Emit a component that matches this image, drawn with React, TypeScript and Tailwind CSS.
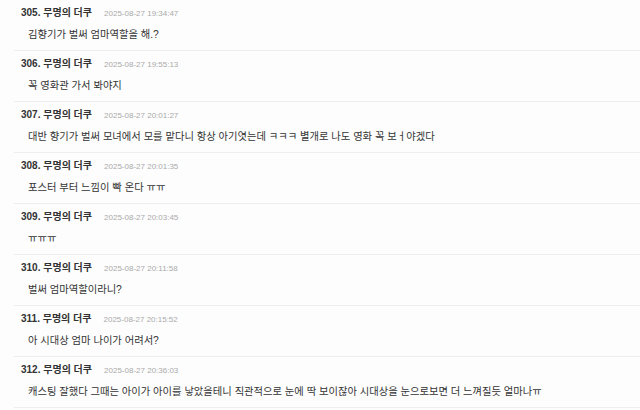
import React from 'react'

const comments = [
  { no: 305, date: '2025-08-27 19:34:47', text: '김향기가 벌써 엄마역할을 해.?' },
  { no: 306, date: '2025-08-27 19:55:13', text: '꼭 영화관 가서 봐야지' },
  { no: 307, date: '2025-08-27 20:01:27', text: '대반 향기가 벌써 모녀에서 모를 맡다니 항상 아기엿는데 ㅋㅋㅋ 별개로 나도 영화 꼭 보ㅓ야겠다' },
  { no: 308, date: '2025-08-27 20:01:35', text: '포스터 부터 느낌이 빡 온다 ㅠㅠ' },
  { no: 309, date: '2025-08-27 20:03:45', text: 'ㅠㅠㅠ' },
  { no: 310, date: '2025-08-27 20:11:58', text: '벌써 엄마역할이라니?' },
  { no: 311, date: '2025-08-27 20:15:52', text: '아 시대상 엄마 나이가 어려서?' },
  { no: 312, date: '2025-08-27 20:36:03', text: '캐스팅 잘했다 그때는 아이가 아이를 낳았을테니 직관적으로 눈에 딱 보이잖아 시대상을 눈으로보면 더 느껴질듯 얼마나ㅠ' },
]

function App() {
  return (
    <div
      className="w-[640px] h-[410px] overflow-hidden bg-[#fdfdfd] pl-[14px]"
      style={{ fontFamily: '"Liberation Sans", "Noto Sans CJK KR", sans-serif' }}
    >
      {comments.map((c) => (
        <div key={c.no} className="h-[51px] border-b border-[#eeeeee] pt-[6px]">
          <div className="flex items-baseline pl-[7px] h-[14px] leading-[14px]">
            <span className="text-[10px] font-bold text-[#333333]">
              {c.no}. 무명의 더쿠
            </span>
            <span className="ml-[12px] text-[8px] text-[#aaaaaa]">{c.date}</span>
          </div>
          <div className="mt-[8px] pl-[14px] text-[10.3px] leading-[14px] text-[#333333]">
            {c.text}
          </div>
        </div>
      ))}
    </div>
  )
}

export default App
